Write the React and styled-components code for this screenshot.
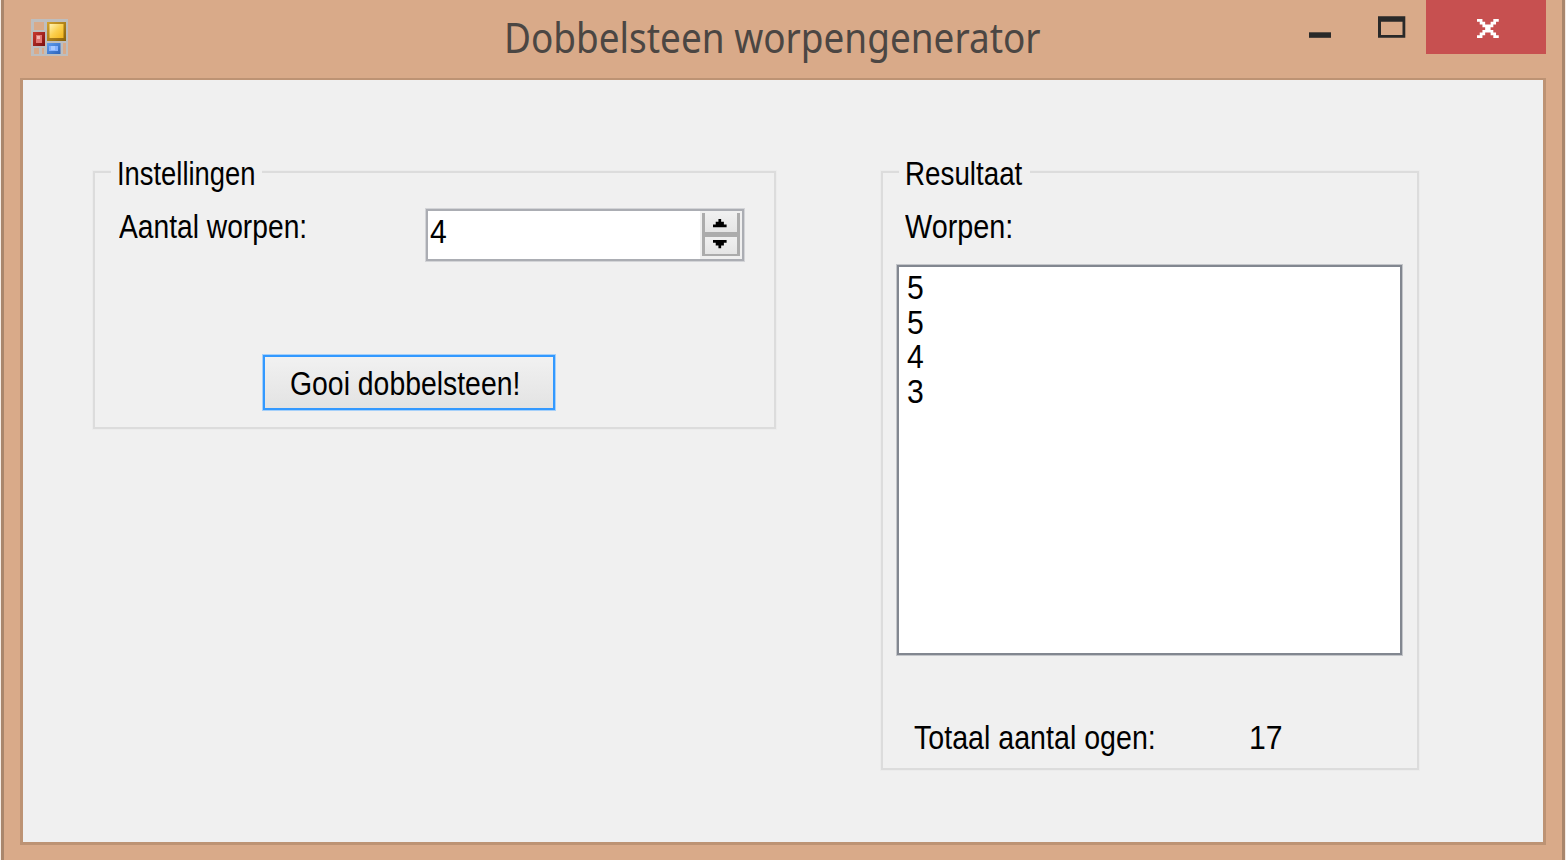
import React from 'react';
import styled, { createGlobalStyle } from 'styled-components';

const GlobalStyle = createGlobalStyle`
  *, *::before, *::after { box-sizing: border-box; }
  body { margin: 0; background: #f4ebe4; overflow: hidden; }
`;

const Window = styled.div`
  display: flex;
  flex-direction: column;
  width: 1564px;
  height: 860px;
  margin-left: 1px;
  padding: 0 16px 15px 16px;
  border: solid #a9866c;
  border-width: 0 3px;
  background: #d9aa89;
  font-family: 'Liberation Sans', Arial, sans-serif;
  font-size: 33.5px;
  line-height: 38px;
  color: #000;
`;

const TitleBar = styled.header`
  display: flex;
  flex: none;
  height: 78px;
  padding-left: 11px;
`;

const AppIcon = styled.svg`
  flex: none;
  width: 37px;
  height: 37px;
  margin-top: 19px;
`;

const Title = styled.h1`
  flex: 1;
  margin: 7px 0 0 436px;
  font: 400 42.5px/60px 'Noto Sans', 'Open Sans', sans-serif;
  color: #4b4643;
  white-space: nowrap;
`;

const Stretch = styled.span`
  display: inline-block;
  white-space: nowrap;
  transform: scaleX(${(p) => p.$x});
  transform-origin: left center;
`;

const Caption = styled.div`
  display: flex;
  flex: none;
  width: 256px;
  height: 54px;
`;

const CaptionButton = styled.button`
  width: ${(p) => p.$width}px;
  height: 54px;
  padding: 0;
  border: 0;
  background: ${(p) => (p.$danger ? '#c75050' : 'transparent')};

  svg { display: block; }
`;

const Client = styled.main`
  display: flex;
  flex: 1;
  align-items: flex-start;
  gap: 105px;
  padding: 74px 0 0 70px;
  border: 3px solid #bd9374;
  border-top-width: 2px;
  background: #f0f0f0;
`;

const Group = styled.section`
  display: flex;
  flex-direction: column;
  flex: none;
  width: ${(p) => p.$width}px;
  height: ${(p) => p.$height}px;
  margin-top: 17px;
  border: 2px solid #dcdcdc;
  box-shadow: 0 0 0 1px #ececec;
`;

const Legend = styled.h2`
  width: ${(p) => p.$width}px;
  height: 38px;
  margin: -18px 0 0 16px;
  padding-left: 6px;
  background: #f0f0f0;
  font: inherit;
`;

const SettingRow = styled.div`
  display: flex;
  align-items: flex-start;
  margin: 16px 0 0 24px;
`;

const FieldLabel = styled.label`
  width: 307px;
  height: 38px;
  margin-top: -1px;
`;

const NumberBox = styled.div`
  display: flex;
  width: 318px;
  height: 52px;
  border: 2px solid #abadb3;
  box-shadow: 0 0 0 1px #d3d4d7;
  background: #fff;
`;

const NumberValue = styled.div`
  flex: 1;
  padding: 2px 0 0 2px;
`;

const Spinner = styled.div`
  width: 42px;
  padding: 2px;
  background: #f0f0f0;
`;

const SpinButton = styled.button`
  display: flex;
  justify-content: center;
  width: 38px;
  height: ${(p) => (p.$up ? 22 : 21)}px;
  padding: ${(p) => (p.$up ? 6 : 3)}px 3px 0 0;
  border: solid #acacac;
  border-width: ${(p) => (p.$up ? '0 3px 3px' : '2px 3px 2px')};
  background: linear-gradient(#f0f0f0, #e5e5e5);

  svg { flex: none; }
`;

const ThrowButton = styled.button`
  width: 292px;
  height: 55px;
  margin: 94px 0 0 168px;
  padding: 2px 0 0 25px;
  border: 2px solid #3399ff;
  box-shadow: 0 0 0 1px #a5d0fa;
  background: linear-gradient(#f1f1f1, #e3e3e3);
  font: inherit;
  color: inherit;
  text-align: left;
`;

const ResultLabel = styled.p`
  height: 38px;
  margin: 15px 0 0 22px;
`;

const ResultList = styled.ul`
  width: 505px;
  height: 390px;
  margin: 19px 0 0 14px;
  padding: 2px 0 0 8px;
  border: 2px solid #828790;
  box-shadow: 0 0 0 1px #c3c5c9;
  background: #fff;
  list-style: none;
`;

const ResultItem = styled.li`
  height: 34.6px;
`;

const TotalRow = styled.div`
  display: flex;
  margin: 64px 0 0 31px;
`;

const TotalLabel = styled.span`
  width: 335px;
  height: 38px;
`;

const throws = [5, 5, 4, 3];

function FormIcon() {
  return (
    <AppIcon viewBox="0 0 37 37">
      <defs>
        <linearGradient id="gold" x1="0" y1="0" x2="1" y2="1">
          <stop offset="0" stopColor="#fff3b5" />
          <stop offset="0.5" stopColor="#fbd04e" />
          <stop offset="1" stopColor="#f2b51c" />
        </linearGradient>
        <linearGradient id="goldEdge" x1="0" y1="0" x2="1" y2="1">
          <stop offset="0" stopColor="#d3a12a" />
          <stop offset="1" stopColor="#8a620c" />
        </linearGradient>
        <linearGradient id="redEdge" x1="0" y1="0" x2="1" y2="1">
          <stop offset="0" stopColor="#c93a30" />
          <stop offset="1" stopColor="#7c0f0f" />
        </linearGradient>
        <linearGradient id="blueEdge" x1="0" y1="0" x2="1" y2="1">
          <stop offset="0" stopColor="#5f9df0" />
          <stop offset="1" stopColor="#2b62b8" />
        </linearGradient>
      </defs>
      <path fill="#bebebe" fillRule="evenodd" d="M0 0H37V37H0ZM3 3V11H13V3ZM3 29V35H8V29ZM11 29V35H13V29ZM32 24V35H35V24Z" />
      <rect x="2" y="13" width="12" height="14" fill="url(#redEdge)" />
      <rect x="5" y="16" width="6" height="8" fill="#e17874" />
      <rect x="6" y="17" width="3" height="3" fill="#f3b6b1" />
      <rect x="16" y="3" width="19" height="19" fill="url(#goldEdge)" />
      <rect x="18.500" y="5" width="14" height="14" fill="url(#gold)" />
      <rect x="16" y="24" width="13.500" height="11" fill="url(#blueEdge)" />
      <rect x="18" y="27" width="9" height="5" fill="#86b2ff" />
      <rect x="20" y="27" width="4" height="4" fill="#a9caff" />
    </AppIcon>
  );
}

export default function App() {
  return (
    <>
      <GlobalStyle />
      <Window>
        <TitleBar>
          <FormIcon />
          <Title><Stretch $x={0.869}>Dobbelsteen worpengenerator</Stretch></Title>
          <Caption>
            <CaptionButton $width={66} aria-label="Minimaliseren">
              <svg width="66" height="54"><rect x="19" y="32.300" width="22" height="5.500" fill="#292929" /></svg>
            </CaptionButton>
            <CaptionButton $width={70} aria-label="Maximaliseren">
              <svg width="70" height="54">
                <path fill="#292929" fillRule="evenodd" d="M22 16.300H49.300V37.700H22ZM25 21.700V35H46.500V21.700Z" />
              </svg>
            </CaptionButton>
            <CaptionButton $width={120} $danger aria-label="Sluiten">
              <svg width="120" height="54">
                <path
                  fill="#fff"
                  transform="translate(51 19) scale(2.720)"
                  d="M0 0H2V1H3V2H5V1H6V0H8V1H7V2H6V3H5V4H6V5H7V6H8V7H6V6H5V5H3V6H2V7H0V6H1V5H2V4H3V3H2V2H1V1H0Z"
                />
              </svg>
            </CaptionButton>
          </Caption>
        </TitleBar>
        <Client>
          <Group $width={683} $height={258}>
            <Legend $width={151}><Stretch $x={0.817}>Instellingen</Stretch></Legend>
            <SettingRow>
              <FieldLabel><Stretch $x={0.842}>Aantal worpen:</Stretch></FieldLabel>
              <NumberBox>
                <NumberValue><Stretch $x={0.9}>4</Stretch></NumberValue>
                <Spinner>
                  <SpinButton $up aria-label="Omhoog">
                    <svg width="14" height="9"><path transform="scale(2.720)" d="M2 0H3V1H4V2H5V3H0V2H1V1H2Z" /></svg>
                  </SpinButton>
                  <SpinButton aria-label="Omlaag">
                    <svg width="14" height="9"><path transform="scale(2.720)" d="M0 0H5V1H4V2H3V3H2V2H1V1H0Z" /></svg>
                  </SpinButton>
                </Spinner>
              </NumberBox>
            </SettingRow>
            <ThrowButton><Stretch $x={0.847}>Gooi dobbelsteen!</Stretch></ThrowButton>
          </Group>
          <Group $width={538} $height={599}>
            <Legend $width={131}><Stretch $x={0.829}>Resultaat</Stretch></Legend>
            <ResultLabel><Stretch $x={0.859}>Worpen:</Stretch></ResultLabel>
            <ResultList>
              {throws.map((value, i) => (
                <ResultItem key={i}><Stretch $x={0.9}>{value}</Stretch></ResultItem>
              ))}
            </ResultList>
            <TotalRow>
              <TotalLabel><Stretch $x={0.854}>Totaal aantal ogen:</Stretch></TotalLabel>
              <Stretch $x={0.9}>{throws.reduce((a, b) => a + b, 0)}</Stretch>
            </TotalRow>
          </Group>
        </Client>
      </Window>
    </>
  );
}
